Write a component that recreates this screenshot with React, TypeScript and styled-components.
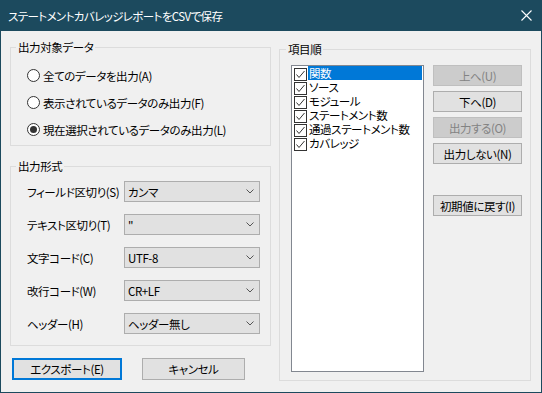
import React from "react";
import styled, { createGlobalStyle, css } from "styled-components";

// Estilos globais
const GlobalStyle = createGlobalStyle`
  html, body {
    margin: 0;
    padding: 0;
    background: #f0f0f0;
  }
  * {
    box-sizing: border-box;
  }
  body {
    font-family: "Noto Sans CJK JP", "Noto Sans", sans-serif;
    font-size: 11.5px;
    letter-spacing: -0.4px;
    font-feature-settings: "palt";
    color: #000;
  }
`;

const Window = styled.div`
  width: 542px;
  height: 393px;
  border: 1px solid #1c4a5e;
  border-top: none;
  background: #f0f0f0;
  display: flex;
  flex-direction: column;
`;

const TitleBar = styled.div`
  height: 31px;
  background: #1c4a5e;
  color: #fff;
  display: flex;
  align-items: center;
  justify-content: space-between;
  padding: 0 9px 0 7px;
  font-size: 11.5px;
  letter-spacing: -0.6px;
`;

const CloseIcon = styled.svg`
  width: 11px;
  height: 11px;
  margin-bottom: 1px;
`;

const Body = styled.div`
  display: flex;
  gap: 8px;
  padding-left: 9px;
`;

const LeftColumn = styled.div`
  width: 261px;
  display: flex;
  flex-direction: column;
`;

const Group = styled.div<{ $top: number; $height?: number; $width?: number }>`
  margin-top: ${({ $top }) => $top}px;
  border: 1px solid #dcdcdc;
  ${({ $height }) =>
    $height &&
    css`
      height: ${$height}px;
    `}
  ${({ $width }) =>
    $width &&
    css`
      width: ${$width}px;
    `}
`;

const Legend = styled.div<{ $left?: number }>`
  width: fit-content;
  margin: -9px 0 0 ${({ $left }) => $left ?? 5}px;
  padding: 0 2px;
  line-height: 16px;
  height: 16px;
  background: #f0f0f0;
  white-space: nowrap;
`;

const RadioList = styled.div`
  padding: 7px 0 2px 16px;
`;

const RadioRow = styled.label`
  height: 27px;
  display: flex;
  align-items: center;
  gap: 3px;
  white-space: nowrap;
`;

const RadioCircle = styled.span<{ $checked?: boolean }>`
  width: 13px;
  height: 13px;
  border: 1px solid #333;
  border-radius: 50%;
  background: #fff;
  display: grid;
  place-items: center;

  &::after {
    content: "";
    width: 7px;
    height: 7px;
    border-radius: 50%;
    background: ${({ $checked }) => ($checked ? "#333" : "transparent")};
  }
`;

const FieldList = styled.div`
  padding: 7px 0 11px 16px;
  display: flex;
  flex-direction: column;
  gap: 12px;
`;

const FieldRow = styled.div`
  display: flex;
  align-items: center;
  height: 21px;
`;

const FieldLabel = styled.span`
  width: 97px;
  white-space: nowrap;
`;

const Combo = styled.div`
  width: 136px;
  height: 21px;
  border: 1px solid #adadad;
  background: #e1e1e1;
  display: flex;
  align-items: center;
  justify-content: space-between;
  padding: 0 5px 0 3px;
`;

const Chevron = styled.svg`
  width: 8px;
  height: 5px;
`;

const ButtonRow = styled.div`
  margin-top: 12px;
  padding-left: 2px;
  display: flex;
  gap: 20px;
`;

const Button = styled.button<{ $width: number; $height?: number; $default?: boolean }>`
  width: ${({ $width }) => $width}px;
  height: ${({ $height }) => $height ?? 21}px;
  padding: 0;
  font: inherit;
  letter-spacing: inherit;
  font-feature-settings: inherit;
  color: #000;
  background: #e1e1e1;
  border: 1px solid #adadad;
  display: flex;
  align-items: center;
  justify-content: center;
  white-space: nowrap;

  ${({ $default }) =>
    $default &&
    css`
      border: 2px solid #0078d7;
    `}

  &:disabled {
    background: #cccccc;
    border-color: #bfbfbf;
    color: #838383;
  }
`;

const RightGroupInner = styled.div`
  display: flex;
  gap: 9px;
  padding: 8px 0 0 11px;
`;

const ListBox = styled.div`
  width: 133px;
  height: 307px;
  border: 1px solid #828790;
  background: #fff;
  padding: 0 1px 0 2px;
`;

const ListItem = styled.div`
  height: 14px;
  display: flex;
  align-items: flex-start;
  gap: 1px;
`;

const CheckBox = styled.span`
  width: 13px;
  height: 13px;
  margin-top: 2px;
  flex: none;
  border: 1px solid #333;
  background: #fff;
  display: grid;
  place-items: center;
`;

const ItemText = styled.span<{ $selected?: boolean }>`
  flex: 1;
  height: 14px;
  line-height: 14px;
  padding-left: 1px;
  white-space: nowrap;
  ${({ $selected }) =>
    $selected &&
    css`
      background: #0078d7;
      color: #fff;
    `}
`;

const ButtonColumn = styled.div`
  display: flex;
  flex-direction: column;
  gap: 5px;
`;

const Spacer = styled.div`
  height: 21px;
`;

const targets = [
  { label: "全てのデータを出力(A)", checked: false },
  { label: "表示されているデータのみ出力(F)", checked: false },
  { label: "現在選択されているデータのみ出力(L)", checked: true },
];

const fields = [
  { label: "フィールド区切り(S)", value: "カンマ" },
  { label: "テキスト区切り(T)", value: "\"" },
  { label: "文字コード(C)", value: "UTF-8" },
  { label: "改行コード(W)", value: "CR+LF" },
  { label: "ヘッダー(H)", value: "ヘッダー無し" },
];

const columns = ["関数", "ソース", "モジュール", "ステートメント数", "通過ステートメント数", "カバレッジ"];

export default function App() {
  return (
    <>
      <GlobalStyle />
      <Window>
        <TitleBar>
          <span>ステートメントカバレッジレポートをCSVで保存</span>
          <CloseIcon viewBox="0 0 11 11">
            <path d="M0.5 0.5 L10.5 10.5 M10.5 0.5 L0.5 10.5" stroke="#fff" strokeWidth="1.1" />
          </CloseIcon>
        </TitleBar>
        <Body>
          <LeftColumn>
            <Group $top={16}>
              <Legend>出力対象データ</Legend>
              <RadioList>
                {targets.map((t) => (
                  <RadioRow key={t.label}>
                    <RadioCircle $checked={t.checked} />
                    {t.label}
                  </RadioRow>
                ))}
              </RadioList>
            </Group>
            <Group $top={20}>
              <Legend>出力形式</Legend>
              <FieldList>
                {fields.map((f) => (
                  <FieldRow key={f.label}>
                    <FieldLabel>{f.label}</FieldLabel>
                    <Combo>
                      <span>{f.value}</span>
                      <Chevron viewBox="0 0 8 5">
                        <polyline points="0.5,0.5 4,4 7.5,0.5" fill="none" stroke="#555" strokeWidth="1" />
                      </Chevron>
                    </Combo>
                  </FieldRow>
                ))}
              </FieldList>
            </Group>
            <ButtonRow>
              <Button $width={110} $height={22} $default>
                エクスポート(E)
              </Button>
              <Button $width={103} $height={22}>
                キャンセル
              </Button>
            </ButtonRow>
          </LeftColumn>
          <Group $top={18} $height={332} $width={252}>
            <Legend $left={6}>項目順</Legend>
            <RightGroupInner>
              <ListBox>
                {columns.map((c, i) => (
                  <ListItem key={c}>
                    <CheckBox>
                      <svg width="11" height="11" viewBox="0 0 11 11">
                        <polyline points="1.5,5.5 4,8.5 9.5,2" fill="none" stroke="#333" strokeWidth="1" />
                      </svg>
                    </CheckBox>
                    <ItemText $selected={i === 0}>{c}</ItemText>
                  </ListItem>
                ))}
              </ListBox>
              <ButtonColumn>
                <Button $width={89} disabled>
                  上へ(U)
                </Button>
                <Button $width={89}>下へ(D)</Button>
                <Button $width={89} disabled>
                  出力する(O)
                </Button>
                <Button $width={89}>出力しない(N)</Button>
                <Spacer />
                <Button $width={89}>初期値に戻す(I)</Button>
              </ButtonColumn>
            </RightGroupInner>
          </Group>
        </Body>
      </Window>
    </>
  );
}
